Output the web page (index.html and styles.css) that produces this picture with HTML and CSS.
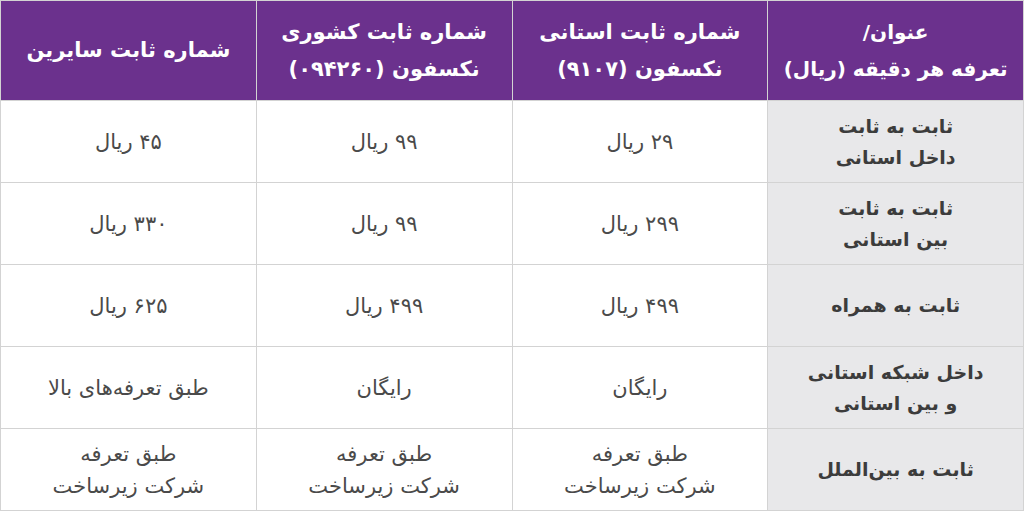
FILE: index.html
```html
<!DOCTYPE html>
<html lang="fa" dir="rtl">
<head>
<meta charset="utf-8">
<link rel="stylesheet" href="styles.css">
</head>
<body>
<table class="tariff">
  <thead>
    <tr>
      <th>عنوان/<br>تعرفه هر دقیقه (ریال)</th>
      <th>شماره ثابت استانی<br>نکسفون (۹۱۰۷)</th>
      <th>شماره ثابت کشوری<br>نکسفون (۰۹۴۲۶۰)</th>
      <th>شماره ثابت سایرین</th>
    </tr>
  </thead>
  <tbody>
    <tr>
      <td class="label">ثابت به ثابت<br>داخل استانی</td>
      <td>۲۹ ریال</td>
      <td>۹۹ ریال</td>
      <td>۴۵ ریال</td>
    </tr>
    <tr>
      <td class="label">ثابت به ثابت<br>بین استانی</td>
      <td>۲۹۹ ریال</td>
      <td>۹۹ ریال</td>
      <td>۳۳۰ ریال</td>
    </tr>
    <tr>
      <td class="label">ثابت به همراه</td>
      <td>۴۹۹ ریال</td>
      <td>۴۹۹ ریال</td>
      <td>۶۲۵ ریال</td>
    </tr>
    <tr>
      <td class="label">داخل شبکه استانی<br>و بین استانی</td>
      <td>رایگان</td>
      <td>رایگان</td>
      <td>طبق تعرفه‌های بالا</td>
    </tr>
    <tr>
      <td class="label">ثابت به بین‌الملل</td>
      <td>طبق تعرفه<br>شرکت زیرساخت</td>
      <td>طبق تعرفه<br>شرکت زیرساخت</td>
      <td>طبق تعرفه<br>شرکت زیرساخت</td>
    </tr>
  </tbody>
</table>
</body>
</html>
```

FILE: styles.css
```css
html, body {
  margin: 0;
  padding: 0;
  background: #ffffff;
}
body {
  width: 1024px;
  height: 512px;
  overflow: hidden;
  font-family: "DejaVu Sans", sans-serif;
}
.tariff {
  width: 1024px;
  border-collapse: collapse;
  table-layout: fixed;
  direction: rtl;
}
.tariff th,
.tariff td {
  border: 1px solid #d3d3d3;
  text-align: center;
  vertical-align: middle;
  padding: 0;
}
.tariff th {
  background: #6b318d;
  color: #ffffff;
  font-weight: bold;
  font-size: 21px;
  line-height: 37px;
  height: 99px;
}
.tariff th:first-child {
  font-size: 20px;
}
.tariff td {
  height: 81px;
  color: #4a4a4a;
  font-size: 21px;
  line-height: 32px;
}
.tariff td.label {
  background: #e8e8ea;
  color: #3c3c3c;
  font-weight: bold;
  font-size: 19px;
  line-height: 31px;
}
```
